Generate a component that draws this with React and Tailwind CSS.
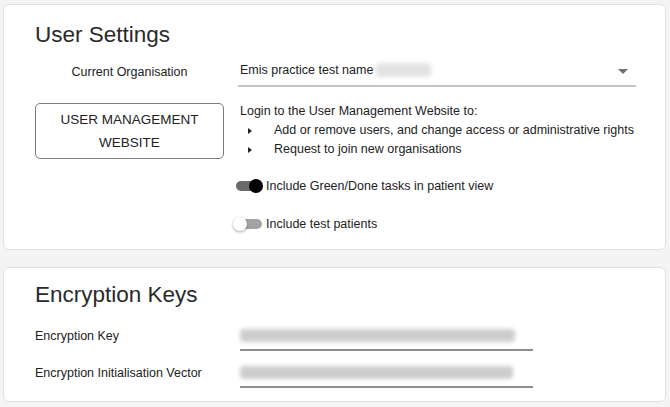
import React from "react";

function Toggle({ on }) {
  return (
    <span className="relative block w-[30px] h-[16px] shrink-0">
      <span
        className={
          "absolute left-[3px] right-[1px] top-[3px] h-[10px] rounded-full " +
          (on ? "bg-[#6a6a6a]" : "bg-[#a3a3a3]")
        }
      />
      <span
        className={
          "absolute top-[1px] w-[14px] h-[14px] rounded-full " +
          (on
            ? "left-[16px] bg-black"
            : "left-0 bg-white shadow-[0_1px_3px_rgba(0,0,0,0.35)]")
        }
      />
    </span>
  );
}

function Bullet({ children }) {
  return (
    <div className="flex items-center h-[19px]">
      <span className="w-[8px] ml-[8px] mr-[18px] flex items-center">
        <span className="block w-0 h-0 border-y-[3.5px] border-y-transparent border-l-[4px] border-l-[#222]" />
      </span>
      <span>{children}</span>
    </div>
  );
}

export default function App() {
  return (
    <div
      className="w-[670px] h-[407px] bg-[#f4f4f4] pt-[4px] pl-[3px] text-[#222]"
      style={{ fontFamily: '"Liberation Sans", Arial, sans-serif' }}
    >
      <div className="w-[663px] h-[246px] bg-white border border-[#e1e1e1] rounded-[6px] pl-[31px] pt-[16px]">
        <h1 className="text-[22.5px] leading-[28px] text-[#2a2a2a]">User Settings</h1>
        <div className="mt-[8px] flex items-center h-[30px]">
          <div className="w-[189px] text-center text-[12.5px]">Current Organisation</div>
          <div className="ml-[14px] w-[398px] h-[30px] border-b-2 border-[#c4c4c4] flex items-center pl-[2px] pb-[2px]">
            <span className="text-[12.5px]">Emis practice test name</span>
            <span className="ml-[3px] w-[55px] h-[14px] bg-[#e3e3e3] blur-[2px] rounded-sm" />
            <span className="ml-auto mr-[8px] mt-[2px] block w-0 h-0 border-x-[5px] border-x-transparent border-t-[5px] border-t-[#707070]" />
          </div>
        </div>
        <div className="mt-[15px] flex">
          <div className="w-[189px] h-[56px] mt-[1px] border border-[#7d7d7d] rounded-[5px] flex flex-col items-center justify-center text-[13.5px] leading-[23px] text-[#222]">
            <span>USER MANAGEMENT</span>
            <span>WEBSITE</span>
          </div>
          <div className="ml-[16px] text-[12.5px] leading-[19px]">
            <div className="h-[19px]">Login to the User Management Website to:</div>
            <Bullet>Add or remove users, and change access or administrative rights</Bullet>
            <Bullet>Request to join new organisations</Bullet>
            <div className="mt-[19px] -ml-[7px] flex items-center h-[16px] gap-[3px]">
              <Toggle on />
              <span>Include Green/Done tasks in patient view</span>
            </div>
            <div className="mt-[22px] -ml-[7px] flex items-center h-[16px] gap-[3px]">
              <Toggle on={false} />
              <span>Include test patients</span>
            </div>
          </div>
        </div>
      </div>

      <div className="mt-[17px] w-[663px] h-[135px] bg-white border border-[#e1e1e1] rounded-[6px] pl-[31px] pt-[13px]">
        <h2 className="text-[22.5px] leading-[28px] text-[#2a2a2a]">Encryption Keys</h2>
        <div className="mt-[13px] flex flex-col gap-[8px] text-[12.5px]">
          <div className="flex items-center">
            <div className="w-[205px]">Encryption Key</div>
            <div className="w-[293px] h-[29px] border-b-2 border-[#8e8e8e] flex items-center">
              <span className="block w-[275px] h-[13px] bg-[#cdcdcd] blur-[2px] rounded-sm" />
            </div>
          </div>
          <div className="flex items-center">
            <div className="w-[205px]">Encryption Initialisation Vector</div>
            <div className="w-[293px] h-[29px] border-b-2 border-[#8e8e8e] flex items-center">
              <span className="block w-[273px] h-[13px] bg-[#cdcdcd] blur-[2px] rounded-sm" />
            </div>
          </div>
        </div>
      </div>
    </div>
  );
}
